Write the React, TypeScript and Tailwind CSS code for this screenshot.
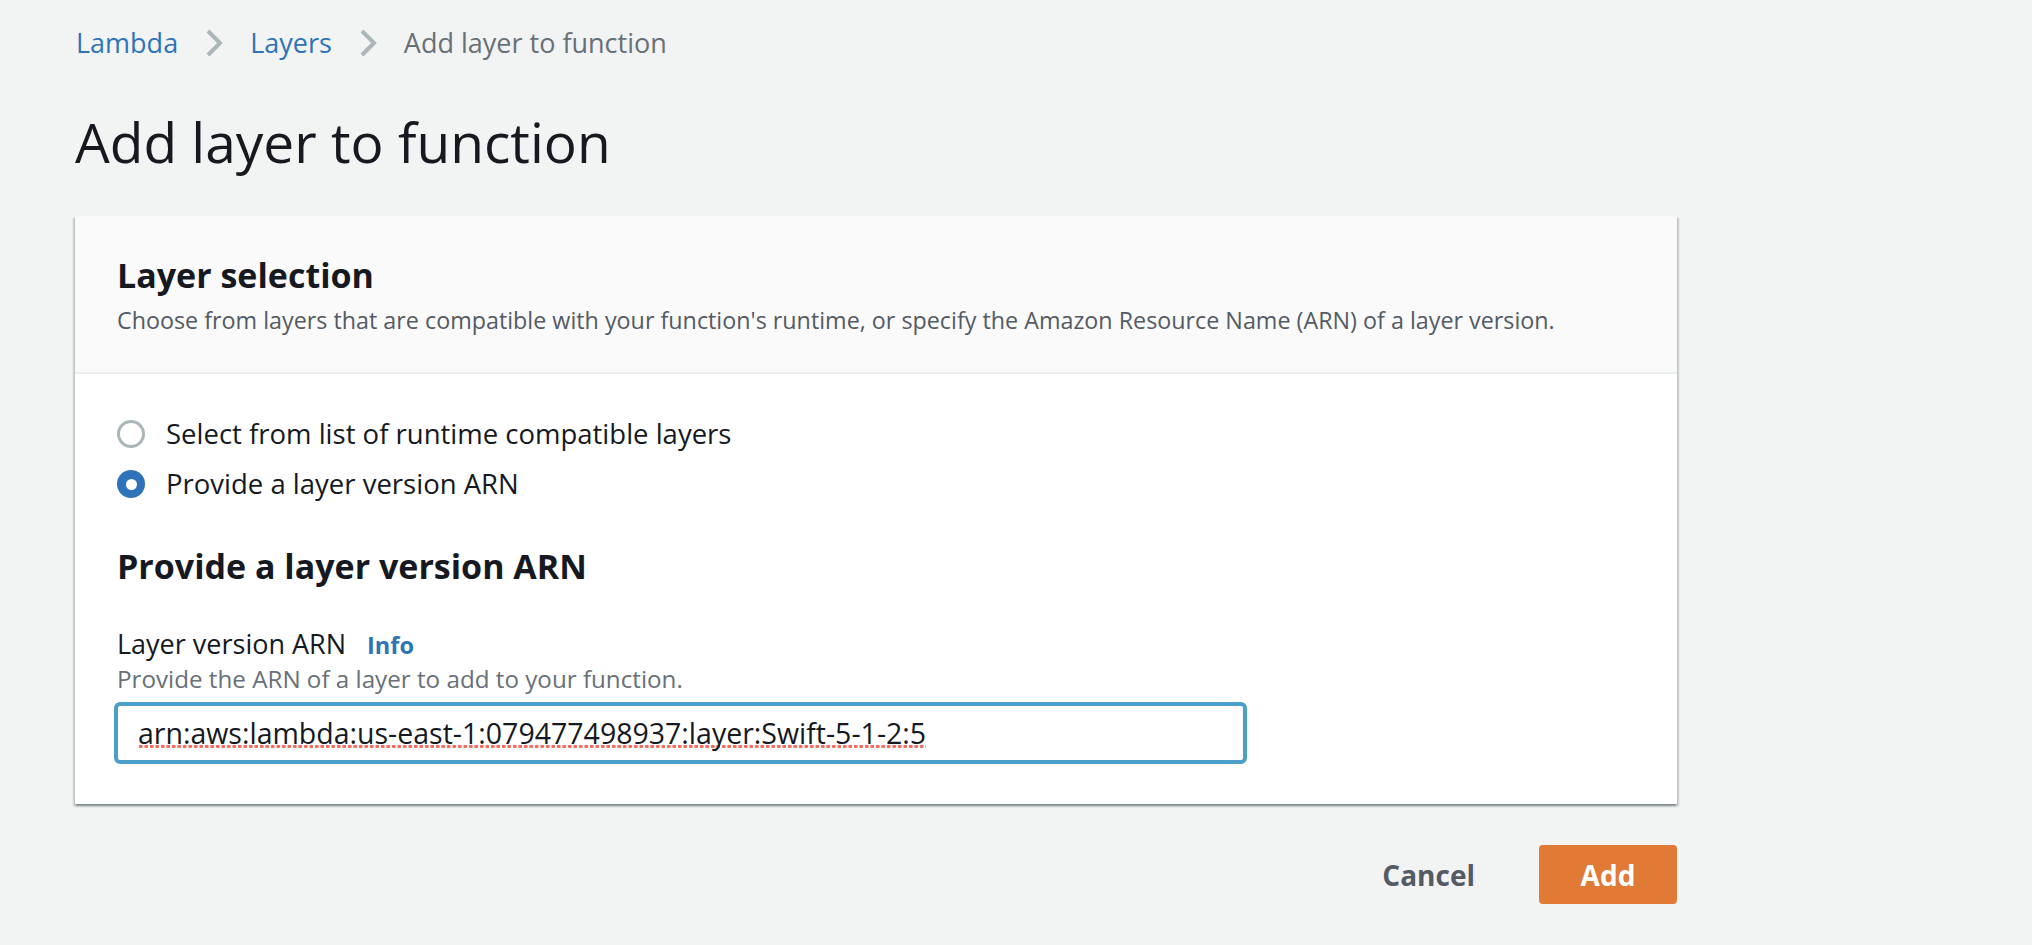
import React from "react";

function Chevron() {
  return (
    <svg width="18" height="28" viewBox="0 0 18 28" className="shrink-0" aria-hidden>
      <path d="M3 2 L15 14 L3 26" fill="none" stroke="#aab7b8" strokeWidth="4" strokeLinecap="butt" strokeLinejoin="miter" />
    </svg>
  );
}

function Radio({ checked }: { checked?: boolean }) {
  if (checked) {
    return (
      <span className="w-[28px] h-[28px] rounded-full bg-[#2f73b8] flex items-center justify-center shrink-0">
        <span className="w-[11px] h-[11px] rounded-full bg-white" />
      </span>
    );
  }
  return <span className="w-[28px] h-[28px] rounded-full border-[3px] border-[#aab7b8] bg-white shrink-0" />;
}

export default function App() {
  return (
    <div
      className="min-h-[945px] w-full bg-[#f2f3f3] text-[#16191f] px-[75px] pt-[23px]"
      style={{ fontFamily: '"Open Sans", "Liberation Sans", Arial, sans-serif' }}
    >
      {/* Breadcrumbs */}
      <nav className="flex items-center gap-[27px] text-[27px] leading-[40px] pl-[1px]">
        <span className="text-[#2f73b8]">Lambda</span>
        <Chevron />
        <span className="text-[#2f73b8]">Layers</span>
        <Chevron />
        <span className="text-[#687078]">Add layer to function</span>
      </nav>

      {/* Title */}
      <h1 className="mt-[47px] text-[55px] leading-[64px] font-normal text-[#16191f]">Add layer to function</h1>

      {/* Card */}
      <div className="mt-[42px] w-[1602px] bg-white shadow-[0_2px_2px_0_rgba(0,28,36,0.3),2px_2px_2px_0_rgba(0,28,36,0.15),-2px_2px_2px_0_rgba(0,28,36,0.15)]">
        <div className="bg-[#fafafa] border-b-2 border-[#eaeded] px-[42px] pt-[37px] pb-[32px]">
          <h2 className="text-[34px] leading-[44px] font-bold text-[#16191f]">Layer selection</h2>
          <p className="mt-[3px] text-[23.3px] leading-[40px] text-[#545b64] whitespace-nowrap">
            Choose from layers that are compatible with your function's runtime, or specify the Amazon Resource Name (ARN) of a layer version.
          </p>
        </div>

        <div className="px-[42px] pt-[40px] pb-[40px]">
          <div className="flex flex-col gap-[10px]">
            <label className="flex items-center gap-[21px] text-[27.5px] leading-[40px]">
              <Radio />
              <span>Select from list of runtime compatible layers</span>
            </label>
            <label className="flex items-center gap-[21px] text-[27.5px] leading-[40px]">
              <Radio checked />
              <span>Provide a layer version ARN</span>
            </label>
          </div>

          <h3 className="mt-[40px] text-[34px] leading-[44px] font-bold text-[#16191f]">Provide a layer version ARN</h3>

          <div className="mt-[39px] flex items-baseline gap-[21px] text-[27px] leading-[34px]">
            <span>Layer version ARN</span>
            <span className="font-bold text-[#2f73b8] text-[23.5px]">Info</span>
          </div>
          <p className="text-[24.2px] leading-[34px] text-[#687078]">Provide the ARN of a layer to add to your function.</p>

          <div className="mt-[6px] ml-[-3px] w-[1133px] h-[62px] border-[4px] border-[#4ba0c9] rounded-[6px] bg-white flex items-center pl-[20px]">
            <span className="inline-block h-[40px] text-[28.5px] leading-[40px] text-[#16191f] bg-[radial-gradient(circle_at_center,#ef6b5e_1.6px,transparent_2.1px)] bg-[length:5.5px_5px] bg-[position:0_31px] bg-repeat-x">
              arn:aws:lambda:us-east-1:079477498937:layer:Swift-5-1-2:5
            </span>
          </div>
        </div>
      </div>

      {/* Actions */}
      <div className="mt-[41px] w-[1602px] flex justify-end items-center gap-[40px]">
        <button className="px-[24px] h-[59px] text-[28px] font-bold text-[#545b64]">Cancel</button>
        <button className="w-[138px] h-[59px] rounded-[4px] bg-[#e07a35] text-white text-[28px] font-bold">Add</button>
      </div>
    </div>
  );
}
